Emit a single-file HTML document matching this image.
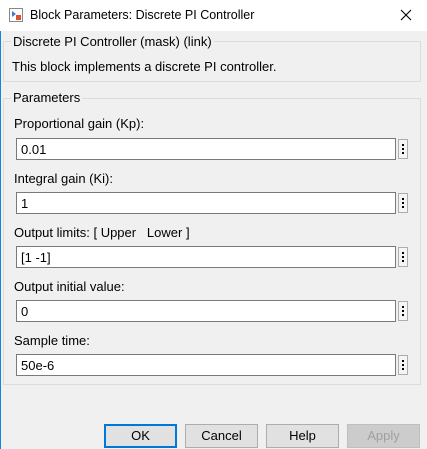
<!DOCTYPE html><html><head><style>
*{box-sizing:border-box;margin:0;padding:0}
body{width:427px;height:449px;overflow:hidden;background:#f0f0f0;font-family:"Liberation Sans",sans-serif;font-size:13px;color:#000;position:relative}
.a{position:absolute}
.title{left:0;top:0;width:427px;height:31px;background:#fff}
.grp{border:1px solid #dcdcdc}
.lbl{background:#f0f0f0;padding:0 2px}
.f{height:22px;border:1px solid #7a7a7a;background:#fff;padding:3px 4px;font-size:13px}
.d{width:10px;height:20px;border:1px solid #adadad;background:#f5f5f5}
.d i{position:absolute;left:3px;width:2px;height:2px;background:#000}
.b{height:24px;width:73px;border:1px solid #adadad;background:#e1e1e1;text-align:center;line-height:22px}
</style></head><body>
<div class="a" style="left:0;top:0;width:1px;height:449px;background:#1883d7"></div>
<div class="a title"></div>
<svg class="a" style="left:9px;top:8px" width="14" height="14"><rect x=".5" y=".5" width="13" height="13" fill="#fff" stroke="#888"/><path d="M3 3l4 3-4 3z" fill="#3a7bd5"/><rect x="7" y="7" width="5" height="5" fill="#d9532c"/></svg>
<div class="a" style="left:30px;top:8px;font-size:12.5px">Block Parameters: Discrete PI Controller</div>
<svg class="a" style="left:400px;top:9px" width="12" height="12"><path d="M1 1L11 11M11 1L1 11" stroke="#000" stroke-width="1.1"/></svg>
<div class="a grp" style="left:3px;top:41px;width:418px;height:41px"></div>
<div class="a lbl" style="left:11px;top:34px">Discrete PI Controller (mask) (link)</div>
<div class="a" style="left:12px;top:59px">This block implements a discrete PI controller.</div>
<div class="a grp" style="left:3px;top:98px;width:418px;height:287px"></div>
<div class="a lbl" style="left:11px;top:90px">Parameters</div>

<div class="a" style="left:14px;top:116px">Proportional gain (Kp):</div>
<div class="a f" style="left:16px;top:138px;width:380px">0.01</div>
<div class="a d" style="left:398px;top:139px"><i style="top:4px"></i><i style="top:8px"></i><i style="top:12px"></i></div>

<div class="a" style="left:14px;top:171px">Integral gain (Ki):</div>
<div class="a f" style="left:16px;top:192px;width:380px">1</div>
<div class="a d" style="left:398px;top:193px"><i style="top:4px"></i><i style="top:8px"></i><i style="top:12px"></i></div>

<div class="a" style="left:14px;top:225px">Output limits: [ Upper &nbsp; Lower ]</div>
<div class="a f" style="left:16px;top:246px;width:380px">[1 -1]</div>
<div class="a d" style="left:398px;top:247px"><i style="top:4px"></i><i style="top:8px"></i><i style="top:12px"></i></div>

<div class="a" style="left:14px;top:279px">Output initial value:</div>
<div class="a f" style="left:16px;top:300px;width:380px">0</div>
<div class="a d" style="left:398px;top:301px"><i style="top:4px"></i><i style="top:8px"></i><i style="top:12px"></i></div>

<div class="a" style="left:14px;top:333px">Sample time:</div>
<div class="a f" style="left:16px;top:354px;width:380px">50e-6</div>
<div class="a d" style="left:398px;top:355px"><i style="top:4px"></i><i style="top:8px"></i><i style="top:12px"></i></div>

<div class="a b" style="left:104px;top:424px;border:2px solid #0078d7;line-height:20px">OK</div>
<div class="a b" style="left:185px;top:424px">Cancel</div>
<div class="a b" style="left:266px;top:424px">Help</div>
<div class="a b" style="left:347px;top:424px;color:#a0a0a0;background:#ccc;border-color:#bfbfbf">Apply</div>
</body></html>
